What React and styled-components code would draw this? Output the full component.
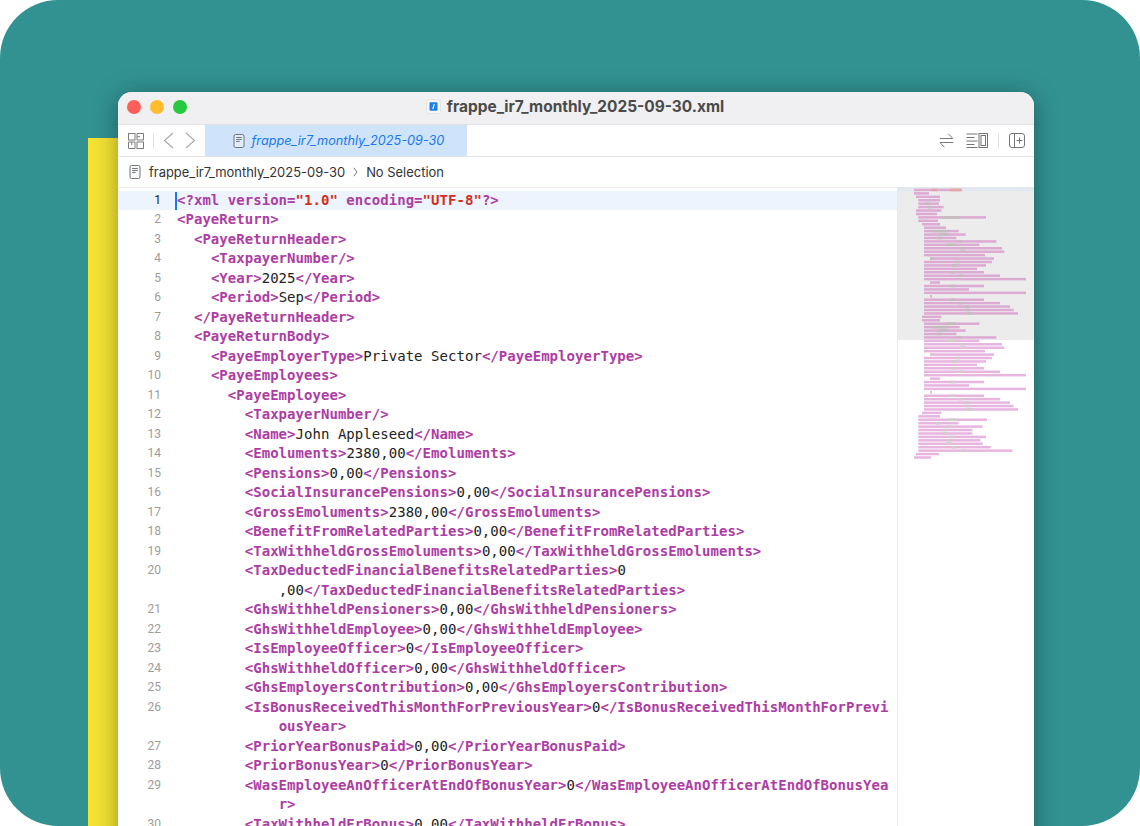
import React from "react";
import styled, { createGlobalStyle } from "styled-components";

const Global = createGlobalStyle`
  html, body { margin: 0; padding: 0; background: #fff; }
  body { width: 1140px; height: 826px; overflow: hidden; }
`;

const Stage = styled.div`
  width: 1140px; height: 826px; box-sizing: border-box; overflow: hidden;
  background: #329292; border-radius: 58px;
  display: flex; align-items: flex-start; padding: 92px 106px 0 88px;
`;
const YellowCard = styled.div`
  width: 30px; height: 688px; margin-top: 46px; flex: none; background: #f4e333;
`;
const Win = styled.div`
  width: 916px; height: 760px; flex: none; background: #fff; overflow: hidden;
  border-radius: 14px 14px 0 0; box-shadow: 0 4px 26px rgba(0,0,0,.36);
  font-family: Inter, "Liberation Sans", sans-serif;
`;
const TitleBar = styled.div`
  height: 33px; box-sizing: border-box; padding: 0 2px 3px 0; background: #f0eff1; border-bottom: 1px solid #e2e2e2;
  position: relative; display: flex; align-items: center; justify-content: center; gap: 6px;
`;
const Lights = styled.div`
  position: absolute; left: 9px; top: 8px; display: flex; gap: 9px;
`;
const Light = styled.span`
  width: 14px; height: 14px; border-radius: 50%; background: ${p => p.$c};
`;
const Title = styled.div`
  font-size: 15.45px; font-weight: 700; color: #4a4a4a;
`;
const TabBar = styled.div`
  height: 31px; display: flex; align-items: center; border-bottom: 1px solid #e4e4e4;
`;
const TabTools = styled.div`
  width: 87px; flex: none; display: flex; align-items: center; padding-left: 10px; box-sizing: border-box;
`;
const Tab = styled.div`
  width: 262px; height: 31px; flex: none; box-sizing: border-box; padding-left: 5px; background: #cfe3fb; display: flex; align-items: center;
  justify-content: center; gap: 7px; color: #1878ee; font-size: 12.7px; font-style: italic;
`;
const TabSpacer = styled.div` flex: 1; `;
const RightTools = styled.div`
  display: flex; align-items: center; padding-right: 9px;
`;
const ToolGap = styled.span` width: 12px; `;
const Sep = styled.span`
  width: 1px; height: 16px; background: #e3e3e3; margin: ${p => p.$m};
`;
const PathBar = styled.div`
  height: 31px; display: flex; align-items: center; padding-left: 11px; gap: 8px;
  font-size: 12.95px; color: #333; border-bottom: 1px solid #e8e8e8; box-sizing: border-box;
`;
const Editor = styled.div` display: flex; height: 640px; `;
const CodePane = styled.div` width: 779px; flex: none; padding-top: 3px; `;
const Row = styled.div`
  display: flex; background: ${p => (p.$active ? "#edf4fe" : "transparent")};
`;
const Num = styled.div`
  width: 43px; flex: none; text-align: right; font: 400 12px/19.49px Roboto, sans-serif;
  color: ${p => (p.$active ? "#222" : "#9c9c9c")};
`;
const Code = styled.div`
  flex: 1; position: relative; margin-left: 16px;
  font: 400 14px/19.49px "DejaVu Sans Mono", monospace; letter-spacing: .04px; color: #222; white-space: pre;
`;
const Caret = styled.span`
  position: absolute; z-index: 1; left: -2px; top: 1px; width: 2px; height: 18px; background: #1878ee;
`;
const CodeLine = styled.div` padding-left: ${p => p.$indent * 8.47}px; `;
const Tag = styled.span` color: #ad3da4; font-weight: 700; `;
const Str = styled.span` color: #d12f1b; font-weight: 700; `;
const Minimap = styled.div`
  width: 137px; flex: none; border-left: 1px solid #e8e8e8; box-sizing: border-box; background: #fff;
`;
const MinimapSvg = styled.svg` display: block; filter: blur(.35px); `;

const L = [
  [0, '<?xml version="1.0" encoding="UTF-8"?>'],
  [0, "<PayeReturn>"],
  [2, "<PayeReturnHeader>"],
  [4, "<TaxpayerNumber/>"],
  [4, "<Year>2025</Year>"],
  [4, "<Period>Sep</Period>"],
  [2, "</PayeReturnHeader>"],
  [2, "<PayeReturnBody>"],
  [4, "<PayeEmployerType>Private Sector</PayeEmployerType>"],
  [4, "<PayeEmployees>"],
  [6, "<PayeEmployee>"],
  [8, "<TaxpayerNumber/>"],
  [8, "<Name>John Appleseed</Name>"],
  [8, "<Emoluments>2380,00</Emoluments>"],
  [8, "<Pensions>0,00</Pensions>"],
  [8, "<SocialInsurancePensions>0,00</SocialInsurancePensions>"],
  [8, "<GrossEmoluments>2380,00</GrossEmoluments>"],
  [8, "<BenefitFromRelatedParties>0,00</BenefitFromRelatedParties>"],
  [8, "<TaxWithheldGrossEmoluments>0,00</TaxWithheldGrossEmoluments>"],
  [8, "<TaxDeductedFinancialBenefitsRelatedParties>0", ",00</TaxDeductedFinancialBenefitsRelatedParties>"],
  [8, "<GhsWithheldPensioners>0,00</GhsWithheldPensioners>"],
  [8, "<GhsWithheldEmployee>0,00</GhsWithheldEmployee>"],
  [8, "<IsEmployeeOfficer>0</IsEmployeeOfficer>"],
  [8, "<GhsWithheldOfficer>0,00</GhsWithheldOfficer>"],
  [8, "<GhsEmployersContribution>0,00</GhsEmployersContribution>"],
  [8, "<IsBonusReceivedThisMonthForPreviousYear>0</IsBonusReceivedThisMonthForPrevi", "ousYear>"],
  [8, "<PriorYearBonusPaid>0,00</PriorYearBonusPaid>"],
  [8, "<PriorBonusYear>0</PriorBonusYear>"],
  [8, "<WasEmployeeAnOfficerAtEndOfBonusYear>0</WasEmployeeAnOfficerAtEndOfBonusYea", "r>"],
  [8, "<TaxWithheldErBonus>0,00</TaxWithheldErBonus>"],
];

function Tokens({ text }) {
  return text.split(/(<[^>]*>?|^[^<>]*>)/).map((t, i) => {
    if (!t) return null;
    if (t[0] === "<" || t.endsWith(">")) {
      return (
        <Tag key={i}>
          {t.split(/("[^"]*")/).map((s, j) => (s[0] === '"' ? <Str key={j}>{s}</Str> : s))}
        </Tag>
      );
    }
    return <React.Fragment key={i}>{t}</React.Fragment>;
  });
}

// [start, end, highlight start, highlight end] in 3x zoom units
const M = [
  [57,130,110,130,"r"],[57,102],[63,135],[70,135],[70,132,92,104],[70,146,100,112],[63,139],[63,126],
  [70,273,140,197],[70,129],[81,135],[87,153],[87,191,108,160],[87,212,133,160],[87,184,125,140],
  [87,304,185,200],[87,253,153,183],[87,321,195,208],[87,328,198,211],[87,270],[105,297,105,117],
  [87,291,180,195],[87,273,170,184],[87,246],[87,267,167,181],[87,315,191,204],[87,393],[105,135],
  [87,267,167,181],[87,222],[87,393],[105,111],[87,267,167,181],[87,315,191,204],[87,345,208,222],
  [87,356,211,225],[87,369,218,232],[81,139],[81,135],
  [87,253,153,183],[87,194,108,160],[87,212,133,160],[87,184,125,140],[87,304,185,200],[87,253,153,183],
  [87,321,195,208],[87,328,198,211],[87,270],[105,297,105,117],[87,291,180,195],[87,273,170,184],[87,246],
  [87,267,167,181],[87,315,191,204],[87,393],[105,135],[87,267,167,181],[87,222],[87,393],[105,111],
  [87,267,167,181],[87,315,191,204],[87,345,208,222],[87,356,211,225],[87,369,218,232],[81,139],[70,135],
  [70,276,155,186],[70,191,122,136],[70,263,155,170],[70,232,143,156],[70,232,143,156],[70,273,163,177],
  [70,256,153,168],[70,263,155,170],[70,287,170,184],[70,352,201,215],[63,132],[57,108],
];

function MinimapArt() {
  const X = v => v / 3 - 3;
  return (
    <MinimapSvg width="136" height="640" viewBox="0 0 136 640" aria-hidden="true">
      <rect x="0" y="0" width="136" height="3" fill="#e2e8f0" />
      <rect x="0" y="3" width="136" height="149" fill="#ececec" />
      {M.map((r, i) => {
        const y = 0.7 + i * 3.43;
        const inView = y < 150;
        const pink = inView ? "#dcaad3" : "#e8b4e0";
        return (
          <g key={i}>
            <rect x={X(r[0])} y={y} width={(r[1] - r[0]) / 3} height="2.5" fill={pink} />
            {r[2] && (
              <rect x={X(r[2])} y={y} width={(r[3] - r[2]) / 3} height="2.5" fill={r[4] ? "#e6a3a8" : inView ? "#c4bcbc" : "#d2cacb"} />
            )}
            {i === 0 && (
              <>
                <rect x={X(132)} y={y} width={(200 - 132) / 3} height="2.5" fill={pink} />
                <rect x={X(165)} y={y} width={(200 - 165) / 3} height="2.5" fill="#e6a3a8" />
              </>
            )}
          </g>
        );
      })}
    </MinimapSvg>
  );
}

const DocIcon = ({ c = "#6f7478" }) => (
  <svg width="12" height="14" viewBox="0 0 12 14" fill="none" stroke={c} strokeWidth="1">
    <rect x="1" y=".5" width="10" height="13" rx="1.6" fill="#f6f7f8" fillOpacity=".5" />
    <path d="M3.2 3.5h5.6M3.2 5.5h5.6M3.2 7.5h3.4" />
  </svg>
);
const AppIcon = () => (
  <svg width="15" height="15" viewBox="0 0 15 15">
    <rect x=".5" y=".5" width="14" height="14" rx="2.5" fill="#f6f6f6" stroke="#dedede" strokeWidth=".7" />
    <path d="M3.500 4.500c0-.7.4-1.200 1-1.200h6c.6 0 1 .5 1 1.200v6c0 .7-.4 1.200-1 1.200h-6c-.6 0-1-.5-1-1.200z" fill="#1f7ee8" />
    <path d="M8.300 5 6.800 10" stroke="#fff" strokeWidth="1.100" />
  </svg>
);
const GridIcon = () => (
  <svg width="16" height="16" viewBox="0 0 16 16" fill="none" stroke="#7d7d7d" strokeWidth="1">
    <rect x=".5" y=".5" width="6.5" height="6.5" />
    <path d="M9 .5h6.5V7H9z M9 3.7h3" />
    <path d="M.5 9H7v6.5H.5z M3.7 9v3" />
    <rect x="9" y="9" width="6.5" height="6.5" />
  </svg>
);
const Chevron = ({ dir, m }) => (
  <svg width="11" height="17" viewBox="0 0 11 17" fill="none" stroke="#a9a9a9" strokeWidth="1.15" style={{ marginLeft: m }}>
    <path d={dir === "l" ? "M10 1 1.5 8.5 10 16" : "M1 1l8.5 7.500L1 16"} />
  </svg>
);
const SwapIcon = () => (
  <svg width="15" height="15" viewBox="0 0 15 15" fill="none" stroke="#7a7a7a" strokeWidth="1">
    <path d="M.8 5.5h13L9.5.8M14.200 9.500H1l4.300 4.700" />
  </svg>
);
const LinesPanelIcon = () => (
  <svg width="22" height="15" viewBox="0 0 22 15" fill="none" stroke="#757575" strokeWidth="1">
    <path d="M.5 1h11M.5 4.500h8M.5 8h11M.5 11.500h8M.5 14.500h11" />
    <rect x="13" y=".5" width="8.500" height="14" />
    <rect x="15" y="2.500" width="4.500" height="10" />
  </svg>
);
const AddEditorIcon = () => (
  <svg width="16" height="15" viewBox="0 0 16 15" fill="none" stroke="#757575" strokeWidth="1">
    <rect x=".5" y=".5" width="15" height="14" rx="2.500" />
    <path d="M5.500.5v14M10.500 4.500v6M7.500 7.500h6" />
  </svg>
);
const SmallChevron = () => (
  <svg width="5" height="10" viewBox="0 0 5 10" fill="none" stroke="#777" strokeWidth="1">
    <path d="M.8.8 4 5 .8 9.200" />
  </svg>
);

export default function App() {
  return (
    <>
      <Global />
      <Stage>
        <YellowCard />
        <Win>
          <TitleBar>
            <Lights>
              <Light $c="#ff5f57" />
              <Light $c="#febc2e" />
              <Light $c="#28c840" />
            </Lights>
            <AppIcon />
            <Title>frappe_ir7_monthly_2025-09-30.xml</Title>
          </TitleBar>
          <TabBar>
            <TabTools>
              <GridIcon />
              <Sep $m="0 9px" />
              <Chevron dir="l" />
              <Chevron dir="r" m="11px" />
            </TabTools>
            <Tab>
              <DocIcon />
              frappe_ir7_monthly_2025-09-30
            </Tab>
            <TabSpacer />
            <RightTools>
              <SwapIcon />
              <ToolGap />
              <LinesPanelIcon />
              <Sep $m="0 10px" />
              <AddEditorIcon />
            </RightTools>
          </TabBar>
          <PathBar>
            <DocIcon />
            frappe_ir7_monthly_2025-09-30
            <SmallChevron />
            No Selection
          </PathBar>
          <Editor>
            <CodePane>
              {L.map(([indent, ...parts], i) => (
                <Row key={i} $active={i === 0}>
                  <Num $active={i === 0}>{i + 1}</Num>
                  <Code>
                    {i === 0 && <Caret />}
                    {parts.map((p, j) => (
                      <CodeLine key={j} $indent={j ? indent + 4 : indent}>
                        <Tokens text={p} />
                      </CodeLine>
                    ))}
                  </Code>
                </Row>
              ))}
            </CodePane>
            <Minimap>
              <MinimapArt />
            </Minimap>
          </Editor>
        </Win>
      </Stage>
    </>
  );
}
